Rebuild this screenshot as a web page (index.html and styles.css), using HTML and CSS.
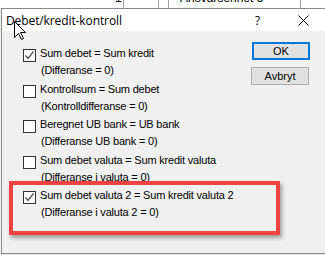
FILE: index.html
```html
<!DOCTYPE html>
<html>
<head>
<meta charset="utf-8">
<link rel="stylesheet" href="styles.css">
</head>
<body>
<div class="app-top">
  <span class="cell-text t1">1</span>
  <span class="cell-text t2">Ansvarsenhet 5</span>
  <i class="vline v1"></i><i class="vline v2"></i><i class="vline v3"></i><i class="vline v4"></i>
</div>
<div class="dialog">
  <div class="titlebar">
    <span class="title">Debet/kredit-kontroll</span>
    <span class="help">?</span>
    <svg class="close" width="11" height="11" viewBox="0 0 11 11"><path d="M0.5 0.5 L10.5 10.5 M10.5 0.5 L0.5 10.5" stroke="#000" stroke-width="1"/></svg>
  </div>
  <div class="content">
    <div class="checks">
      <div class="row">
        <span class="cb"><svg width="11" height="11" viewBox="0 0 11 11"><path d="M1.5 5.5 L4 8.5 L9.5 1.5" fill="none" stroke="#555" stroke-width="1.3"/></svg></span>
        <div class="labels"><div class="main">Sum debet = Sum kredit</div><div class="sub">(Differanse = 0)</div></div>
      </div>
      <div class="row">
        <span class="cb"></span>
        <div class="labels"><div class="main">Kontrollsum = Sum debet</div><div class="sub">(Kontrolldifferanse = 0)</div></div>
      </div>
      <div class="row">
        <span class="cb"></span>
        <div class="labels"><div class="main">Beregnet UB bank = UB bank</div><div class="sub">(Differanse UB bank = 0)</div></div>
      </div>
      <div class="row">
        <span class="cb"></span>
        <div class="labels"><div class="main">Sum debet valuta = Sum kredit valuta</div><div class="sub">(Differanse i valuta = 0)</div></div>
      </div>
      <div class="row">
        <span class="cb"><svg width="11" height="11" viewBox="0 0 11 11"><path d="M1.5 5.5 L4 8.5 L9.5 1.5" fill="none" stroke="#555" stroke-width="1.3"/></svg></span>
        <div class="labels"><div class="main">Sum debet valuta 2 = Sum kredit valuta 2</div><div class="sub">(Differanse i valuta 2 = 0)</div></div>
      </div>
    </div>
    <div class="buttons">
      <button class="btn default">OK</button>
      <button class="btn">Avbryt</button>
    </div>
  </div>
</div>
<div class="app-bottom"></div>
<div class="highlight"></div>
<svg class="cursor" width="13" height="20" viewBox="0 0 13 20"><path d="M0.5 0.5 L0.5 16.5 L4.5 12.5 L7.5 18.5 L9.5 17.5 L6.5 11.5 L11.5 11.5 Z" fill="#fff" stroke="#000" stroke-width="1" stroke-linejoin="miter"/></svg>
</body>
</html>
```
FILE: styles.css
```css
html, body {
  margin: 0;
  padding: 0;
}
body {
  width: 325px;
  height: 255px;
  overflow: hidden;
  background: #f0f0f0;
  font-family: "Liberation Sans", Arial, sans-serif;
  position: relative;
}
.app-top {
  position: relative;
  height: 8px;
  background: #ffffff;
  overflow: hidden;
}
.cell-text {
  position: absolute;
  top: -9px;
  font-size: 12px;
  color: #000;
  line-height: 14px;
}
.t1 { left: 115px; }
.t2 { left: 180px; }
.vline {
  position: absolute;
  top: 0;
  width: 1px;
  height: 8px;
  background: #a0a0a0;
}
.v1 { left: 123px; }
.v2 { left: 158px; }
.v3 { left: 168px; }
.v4 { left: 300px; }
.dialog {
  margin-left: 1px;
  height: 244px;
  border: 1px solid #8a8a8a;
  border-right: none;
  display: flex;
  flex-direction: column;
  background: #f0f0f0;
}
.titlebar {
  height: 22px;
  background: #ffffff;
  display: flex;
  align-items: center;
  position: relative;
}
.title {
  margin-left: 4px;
  font-family: "Open Sans", "Liberation Sans", sans-serif;
  font-size: 12px;
  letter-spacing: -0.1px;
  color: #000;
}
.help {
  position: absolute;
  left: 253px;
  top: 3px;
  font-family: "Open Sans", sans-serif;
  font-size: 12px;
  color: #000;
}
.close {
  position: absolute;
  left: 296px;
  top: 6px;
}
.content {
  flex: 1;
  display: flex;
}
.checks {
  padding-top: 14px;
  padding-left: 21px;
  flex: 1;
}
.row {
  height: 35.5px;
  display: flex;
  align-items: flex-start;
}
.cb {
  width: 11px;
  height: 11px;
  border: 1px solid #333;
  background: #fff;
  margin-top: 4px;
  margin-right: 4px;
  display: flex;
}
.labels {
  font-size: 11px;
  line-height: 17px;
  letter-spacing: -0.2px;
  color: #000;
}
.sub {
  padding-left: 1px;
}
.buttons {
  padding-top: 11px;
  padding-right: 15px;
  display: flex;
  flex-direction: column;
  gap: 7px;
}
.btn {
  width: 58px;
  height: 18px;
  box-sizing: border-box;
  border: 1px solid #adadad;
  background: #e1e1e1;
  font-family: "Liberation Sans", Arial, sans-serif;
  font-size: 11px;
  color: #000;
  padding: 0;
  margin: 0;
  line-height: 14px;
}
.btn.default {
  border: 2px solid #0078d7;
  margin-left: 1px;
}
.app-bottom {
  height: 1px;
  background: #e8e8e8;
}
.highlight {
  position: absolute;
  left: 9px;
  top: 181px;
  width: 263px;
  height: 46px;
  border: 4px solid #ef4242;
  box-shadow: 2px 3px 4px rgba(0,0,0,0.35);
}
.cursor {
  position: absolute;
  left: 14px;
  top: 21px;
}
```
